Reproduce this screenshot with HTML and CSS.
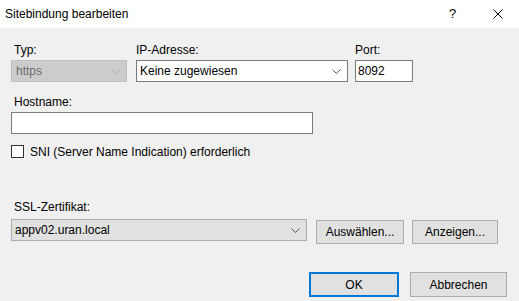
FILE: index.html
```html
<!DOCTYPE html>
<html>
<head>
  <meta charset="UTF-8">
  <title>Sitebindung bearbeiten</title>
  <link rel="stylesheet" href="styles.css">
</head>
<body>
  <div class="titelleiste">
    <span class="titel">Sitebindung bearbeiten</span>
    <span class="hilfe">?</span>
    <span class="schliessen">
      <svg width="10" height="10" viewBox="0 0 10 10"><path d="M0.5 0.5 L9.5 9.5 M9.5 0.5 L0.5 9.5" stroke="#000" stroke-width="1" fill="none"/></svg>
    </span>
  </div>

  <div class="inhalt">
    <div class="zeile1">
      <div class="feld typ">
        <label class="einzug">Typ:</label>
        <div class="combo gesperrt"><span>https</span><svg class="pfeil" width="9" height="5" viewBox="0 0 9 5"><path d="M0.5 0.5 L4.5 4.5 L8.5 0.5" stroke="#b0b0b0" fill="none"/></svg></div>
      </div>
      <div class="feld ip">
        <label>IP-Adresse:</label>
        <div class="combo"><span>Keine zugewiesen</span><svg class="pfeil" width="9" height="5" viewBox="0 0 9 5"><path d="M0.5 0.5 L4.5 4.5 L8.5 0.5" stroke="#555" fill="none"/></svg></div>
      </div>
      <div class="feld port">
        <label>Port:</label>
        <div class="eingabe">8092</div>
      </div>
    </div>

    <div class="feld host">
      <label class="einzug">Hostname:</label>
      <div class="eingabe"></div>
    </div>

    <div class="check">
      <span class="box"></span>
      <span>SNI (Server Name Indication) erforderlich</span>
    </div>

    <label class="einzug ssl-lbl">SSL-Zertifikat:</label>
    <div class="zeile-ssl">
      <div class="combo flach"><span>appv02.uran.local</span><svg class="pfeil" width="9" height="5" viewBox="0 0 9 5"><path d="M0.5 0.5 L4.5 4.5 L8.5 0.5" stroke="#555" fill="none"/></svg></div>
      <div class="knopf auswahl">Auswählen...</div>
      <div class="knopf anzeigen">Anzeigen...</div>
    </div>

    <div class="fuss">
      <div class="knopf ok">OK</div>
      <div class="knopf abbrechen">Abbrechen</div>
    </div>
  </div>
</body>
</html>
```

FILE: styles.css
```css
body {
  margin: 0;
  background: #f0f0f0;
  font-family: "Liberation Sans", Arial, sans-serif;
  font-size: 12px;
  color: #000;
  width: 519px;
  height: 301px;
  overflow: hidden;
}

.titelleiste {
  height: 28px;
  background: #fff;
  display: flex;
  align-items: center;
}
.titel { flex: 1; padding-left: 5px; padding-bottom: 1px; }
.hilfe { width: 14px; margin-right: 30px; font-size: 13px; padding-bottom: 2px; }
.schliessen { width: 10px; margin-right: 16px; height: 10px; display: flex; }

.inhalt { padding: 0 0 0 11px; }

label { display: block; line-height: 15px; margin-bottom: 2px; }
.einzug { padding-left: 3px; }

.zeile1 { display: flex; margin-top: 15px; }
.typ { width: 116px; margin-right: 9px; }
.ip { width: 212px; margin-right: 7px; }
.port { width: 58px; }
.ip label { padding-left: 0; }

.combo, .eingabe {
  box-sizing: border-box;
  height: 22px;
  border: 1px solid #7a7a7a;
  background: #fff;
  display: flex;
  align-items: center;
  padding-left: 3px;
}
.combo span { flex: 1; }
.pfeil { margin-right: 6px; }
.gesperrt { background: #cccccc; border-color: #bfbfbf; color: #6d6d6d; padding-left: 4px; }
.port .eingabe { padding-left: 2px; }

.host { margin-top: 13px; }
.host .eingabe { width: 302px; }

.check {
  display: flex;
  align-items: center;
  margin-top: 9px;
  height: 17px;
}
.box {
  box-sizing: border-box;
  width: 13px;
  height: 13px;
  border: 1px solid #333;
  background: #fff;
  margin-right: 6px;
}

.ssl-lbl { margin-top: 40px; margin-bottom: 4px; }
.zeile-ssl { display: flex; align-items: flex-start; }
.flach { width: 296px; background: #e1e1e1; border-color: #adadad; margin-right: 9px; }

.knopf {
  box-sizing: border-box;
  height: 24px;
  background: #e1e1e1;
  border: 1px solid #adadad;
  display: flex;
  align-items: center;
  justify-content: center;
}
.auswahl { width: 88px; margin-top: 1px; margin-right: 8px; }
.anzeigen { width: 86px; margin-top: 1px; }

.fuss {
  display: flex;
  justify-content: flex-end;
  margin-top: 28px;
  padding-right: 12px;
}
.ok { width: 90px; height: 25px; border: 2px solid #0078d7; margin-right: 11px; }
.abbrechen { width: 97px; height: 25px; }
```
